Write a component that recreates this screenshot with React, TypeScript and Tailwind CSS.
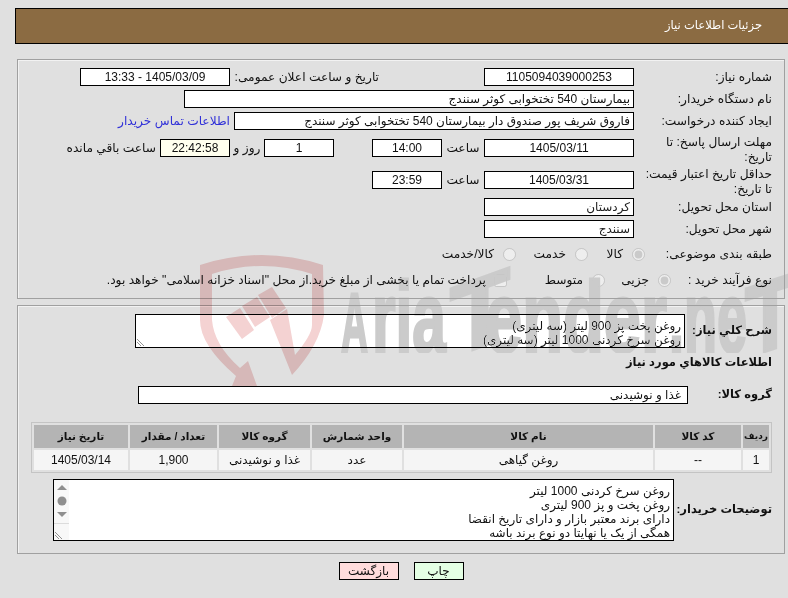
const font = "font-['Liberation_Sans','DejaVu_Sans',sans-serif]";

function Box({ className = 'bg-white', children }: { className?: string; children?: React.ReactNode }) {
  return (
    <div className={`h-[18px] border border-black flex items-center justify-center text-[12px] leading-none shrink-0 whitespace-nowrap overflow-hidden ${className}`}>
      {children}
    </div>
  );
}

function Label({ children, twoLine }: { children: React.ReactNode; twoLine?: boolean }) {
  return <div className={`w-[138px] shrink-0 text-[12.2px] leading-[15px] whitespace-nowrap ${twoLine ? 'mt-[3px]' : ''}`}>{children}</div>;
}

function Radio({ checked, label, className = '' }: { checked?: boolean; label: string; className?: string }) {
  return (
    <label className={`flex items-center gap-[9px] text-[12.2px] shrink-0 whitespace-nowrap ${className}`}>
      <input type="radio" disabled defaultChecked={checked} className="m-0 w-[13px] h-[13px]" />
      <span>{label}</span>
    </label>
  );
}

function Grip() {
  return (
    <svg className="absolute left-[1px] bottom-[1px]" width="8" height="8" viewBox="0 0 8 8" stroke="#666" strokeWidth="0.7">
      <path d="M0 1 L7 8 M0 4 L4 8" />
    </svg>
  );
}

const columns = [26, 86, 249, 90, 91, 87, 94];
const heads = ['ردیف', 'کد کالا', 'نام کالا', 'واحد شمارش', 'گروه کالا', 'تعداد / مقدار', 'تاریخ نیاز'];
const cells = ['1', '--', 'روغن گیاهی', 'عدد', 'غذا و نوشیدنی', '1,900', '1405/03/14'];

export default function App() {
  return (
    <div dir="rtl" className={`relative w-[788px] h-[598px] overflow-hidden bg-[#e0e0e0] text-[#111] ${font}`}>
      {/* header */}
      <div className="mt-[8px] ml-[15px] mr-[-20px] h-[36px] border border-black bg-[#8b6b42] text-white text-[11.5px] flex items-center pr-[45px]">
        جزئیات اطلاعات نیاز
      </div>

      {/* details */}
      <div className="mt-[15px] ml-[17px] mr-[3px] h-[240px] border border-[#a0a0a0] shadow-[inset_1px_1px_0_#f2f2f2] pr-[12px] pt-[8px]">
        <div className="flex items-center h-[18px]">
          <Label>شماره نیاز:</Label>
          <Box className="w-[150px] bg-white">1105094039000253</Box>
          <div className="w-[105px] shrink-0" />
          <div className="w-[149px] shrink-0 text-[12.2px] whitespace-nowrap">تاریخ و ساعت اعلان عمومی:</div>
          <Box className="w-[150px] bg-white">1405/03/09 - 13:33</Box>
        </div>
        <div className="flex items-center h-[18px] mt-[4px]">
          <Label>نام دستگاه خریدار:</Label>
          <Box className="w-[450px] justify-start pr-[3px] bg-white">بیمارستان 540 تختخوابی کوثر سنندج</Box>
        </div>
        <div className="flex items-center h-[18px] mt-[4px]">
          <Label>ایجاد کننده درخواست:</Label>
          <Box className="w-[400px] justify-start pr-[3px] bg-white">فاروق شریف پور صندوق دار بیمارستان 540 تختخوابی کوثر سنندج</Box>
          <div className="mr-[4px] text-[12.2px] text-[#3030d8] whitespace-nowrap">اطلاعات تماس خریدار</div>
        </div>
        <div className="flex items-center h-[18px] mt-[9px]">
          <Label twoLine>مهلت ارسال پاسخ: تا<br />تاریخ:</Label>
          <Box className="w-[150px] bg-white">1405/03/11</Box>
          <div className="w-[42px] shrink-0 text-center text-[12.2px]">ساعت</div>
          <Box className="w-[70px] bg-white">14:00</Box>
          <div className="w-[38px] shrink-0" />
          <Box className="w-[70px] bg-white">1</Box>
          <div className="w-[34px] shrink-0 text-center text-[12.2px]">روز و</div>
          <Box className="w-[70px] bg-[#ffffee]">22:42:58</Box>
          <div className="mr-[4px] text-[12.2px] whitespace-nowrap">ساعت باقي مانده</div>
        </div>
        <div className="flex items-center h-[18px] mt-[14px]">
          <Label twoLine>حداقل تاریخ اعتبار قیمت:<br />تا تاریخ:</Label>
          <Box className="w-[150px] bg-white">1405/03/31</Box>
          <div className="w-[42px] shrink-0 text-center text-[12.2px]">ساعت</div>
          <Box className="w-[70px] bg-white">23:59</Box>
        </div>
        <div className="flex items-center h-[18px] mt-[9px]">
          <Label>استان محل تحویل:</Label>
          <Box className="w-[150px] justify-start pr-[3px] bg-white text-[#222]">کردستان</Box>
        </div>
        <div className="flex items-center h-[18px] mt-[4px]">
          <Label>شهر محل تحویل:</Label>
          <Box className="w-[150px] justify-start pr-[3px] bg-white text-[#222]">سنندج</Box>
        </div>
        <div className="flex items-center h-[18px] mt-[7px]">
          <div className="w-[127px] shrink-0 text-[12.2px] whitespace-nowrap">طبقه بندی موضوعی:</div>
          <Radio checked label="کالا" className="w-[57px]" />
          <Radio label="خدمت" className="w-[72px]" />
          <Radio label="کالا/خدمت" />
        </div>
        <div className="flex items-center h-[18px] mt-[8px]">
          <div className="w-[101px] shrink-0 text-[12.2px] whitespace-nowrap">نوع فرآیند خرید :</div>
          <Radio checked label="جزیی" className="w-[66px]" />
          <Radio label="متوسط" className="w-[98px]" />
          <label className="flex items-center gap-[8px] text-[12.2px] whitespace-nowrap">
            <input type="checkbox" disabled className="m-0 w-[13px] h-[13px]" />
            <span>پرداخت تمام یا بخشی از مبلغ خرید.از محل "اسناد خزانه اسلامی" خواهد بود.</span>
          </label>
        </div>
      </div>

      {/* goods */}
      <div className="mt-[6px] ml-[17px] mr-[3px] h-[249px] border border-[#a0a0a0] shadow-[inset_1px_1px_0_#f2f2f2] pr-[12px] pt-[8px]">
        <div className="flex items-center h-[34px]">
          <div className="w-[87px] shrink-0 text-[11.5px] font-bold whitespace-nowrap">شرح کلي نیاز:</div>
          <div className="relative w-[550px] h-[34px] border border-black bg-white pr-[3px] pt-[4px] text-[12px] leading-[14px] overflow-hidden">
            <div>روغن پخت پز 900 لیتر (سه لیتری)</div>
            <div>روغن سرخ کردنی 1000 لیتر (سه لیتری)</div>
            <Grip />
          </div>
        </div>
        <div className="mt-[6px] text-[11.5px] font-bold leading-[16px] whitespace-nowrap">اطلاعات کالاهاي مورد نیاز</div>
        <div className="flex items-center h-[18px] mt-[16px]">
          <div className="w-[84px] shrink-0 text-[11.5px] font-bold whitespace-nowrap">گروه کالا:</div>
          <Box className="w-[550px] justify-start pr-[6px] bg-white">غذا و نوشیدنی</Box>
        </div>
        <table className="mt-[18px] w-[741px] table-fixed border border-[#c4c4c4] border-separate border-spacing-[2px] text-[12px]">
          <colgroup>
            {columns.map((w, i) => (
              <col key={i} style={{ width: w }} />
            ))}
          </colgroup>
          <thead>
            <tr>
              {heads.map((h, i) => (
                <th key={h} className={`h-[23px] p-0 bg-[#b4b4b4] text-center font-bold whitespace-nowrap ${i === 0 ? 'text-[9px]' : 'text-[10.5px]'}`}>{h}</th>
              ))}
            </tr>
          </thead>
          <tbody>
            <tr>
              {cells.map((c, i) => (
                <td key={i} className="h-[20px] p-0 bg-[#f5f5f5] text-center whitespace-nowrap">{c}</td>
              ))}
            </tr>
          </tbody>
        </table>
        <div className="flex items-center mt-[6px] h-[62px]">
          <div className="w-[98px] shrink-0 text-[11.5px] font-bold whitespace-nowrap">توضیحات خریدار:</div>
          <div className="w-[621px] h-[62px] border border-black bg-white flex justify-between overflow-hidden">
            <div className="pr-[3px] pt-[4px] text-[12px] leading-[14px]">
              <div>روغن سرخ کردنی 1000 لیتر</div>
              <div>روغن پخت و پز 900 لیتری</div>
              <div>دارای برند معتبر بازار و دارای تاریخ انقضا</div>
              <div>همگی از یک یا نهایتا دو نوع برند باشه</div>
            </div>
            <div className="w-[15px] h-full bg-[#f8f8f8] flex flex-col items-center">
              <svg className="mt-[5px]" width="10" height="32" viewBox="0 0 10 32" fill="#8f8f8f">
                <path d="M5 0 L10 5 L0 5 Z" />
                <circle cx="5" cy="16" r="4.5" />
                <path d="M0 27 L10 27 L5 32 Z" />
              </svg>
              <div className="mt-[6px] w-full flex-1 border-t border-[#dcdcdc] relative">
                <Grip />
              </div>
            </div>
          </div>
        </div>
      </div>

      {/* buttons */}
      <div className="mt-[8px] flex justify-center gap-[15px] pl-[14px]">
        <Box className="w-[50px] bg-[#e4ffe4]">چاپ</Box>
        <Box className="w-[60px] bg-[#ffdcdc]">بازگشت</Box>
      </div>

      {/* watermark */}
      <svg className="absolute left-0 top-0 w-[788px] h-[386px] pointer-events-none mix-blend-multiply" viewBox="0 0 788 386" fill="#f4d2d2">
        <path d="M200 265 Q262 245 323 265 L324 315 Q320 345 292 375 L270 320 L287 309 L295 355 Q312 335 312 325 L312 274 Q262 258 212 274 L212 320 Q214 345 240 368 L248 361 L257 386 L232 386 L236 376 Q200 345 200 320 Z" />
        <path d="M226 317 L240 308 L254 330 L242 339 Z" />
        <path d="M242 306 L257 297 L270 317 L255 327 Z" />
        <path d="M258 295 L272 287 L286 308 L272 318 Z" />
      </svg>
      <svg dir="ltr" direction="ltr" className="absolute left-0 top-0 w-[788px] h-[353px] pointer-events-none mix-blend-darken" viewBox="0 0 788 353" fill="#cbcbcb" stroke="#cbcbcb" strokeWidth="3" fontFamily="'Liberation Sans Narrow','Liberation Sans',sans-serif" fontWeight="bold">
        <text x="341" y="352" fontSize="84" textLength="27" lengthAdjust="spacingAndGlyphs">A</text>
        <text x="372" y="352" fontSize="100" textLength="74" lengthAdjust="spacingAndGlyphs">ria</text>
        <text transform="translate(450 352) skewY(-20)" y="6" fontSize="100" textLength="60" lengthAdjust="spacingAndGlyphs">T</text>
        <text x="485" y="352" fontSize="100" textLength="182" lengthAdjust="spacingAndGlyphs">ender</text>
        <text x="669" y="352" fontSize="100" textLength="78" lengthAdjust="spacingAndGlyphs">.ne</text>
        <text transform="translate(745 352) skewY(-18)" y="6" fontSize="100" textLength="50" lengthAdjust="spacingAndGlyphs">T</text>
      </svg>
    </div>
  );
}
